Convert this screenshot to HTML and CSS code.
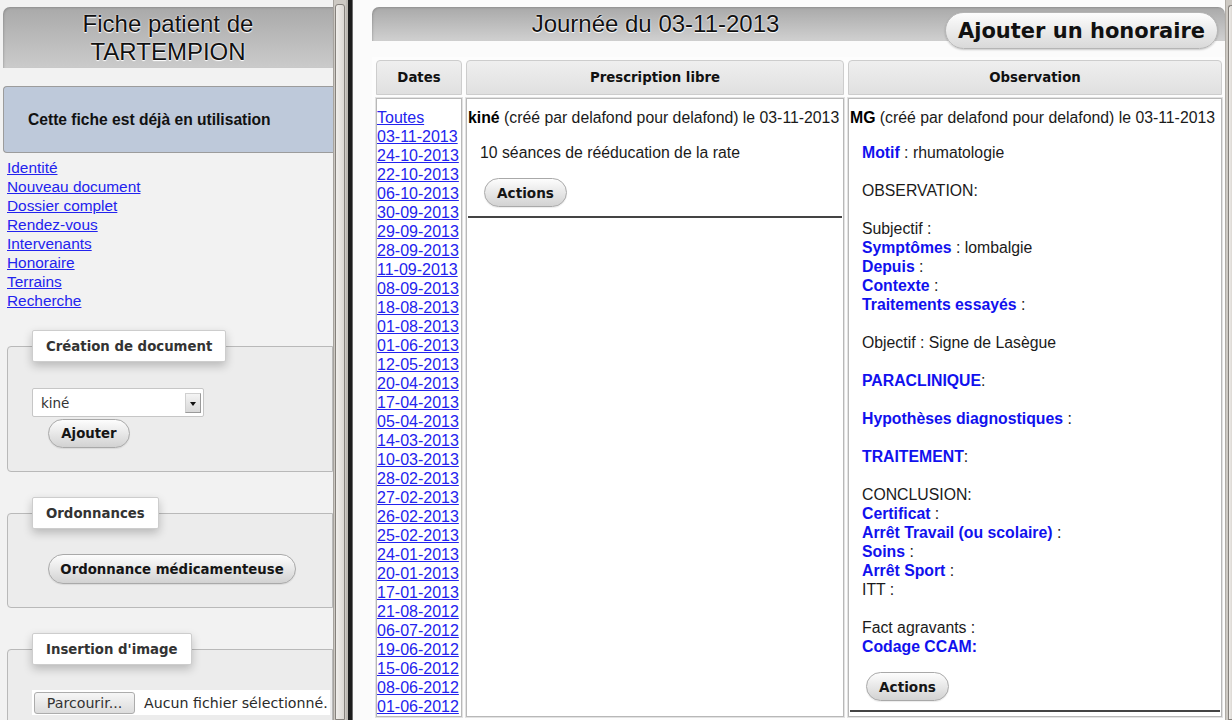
FILE: index.html
```html
<!DOCTYPE html>
<html lang="fr">
<head>
<meta charset="utf-8">
<title>Fiche patient</title>
<link rel="stylesheet" href="styles.css">
</head>
<body>
<div class="screen">
  <div class="left">
    <div class="lhead">Fiche patient de<br>TARTEMPION</div>
    <div class="notice">Cette fiche est déjà en utilisation</div>
    <nav class="menu">
      <a href="#">Identité</a>
      <a href="#">Nouveau document</a>
      <a href="#">Dossier complet</a>
      <a href="#">Rendez-vous</a>
      <a href="#">Intervenants</a>
      <a href="#">Honoraire</a>
      <a href="#">Terrains</a>
      <a href="#">Recherche</a>
    </nav>
    <fieldset class="box first">
      <legend>Création de document</legend>
      <div class="select"><span class="sel-text">kiné</span><span class="sel-arrow"></span></div>
      <button class="btn add">Ajouter</button>
    </fieldset>
    <fieldset class="box">
      <legend>Ordonnances</legend>
      <button class="btn ordo">Ordonnance médicamenteuse</button>
    </fieldset>
    <fieldset class="box">
      <legend>Insertion d'image</legend>
      <div class="file"><span class="file-btn">Parcourir...</span><span class="file-text">Aucun fichier sélectionné.</span></div>
    </fieldset>
  </div>
  <div class="vscroll"><div class="thumb"></div></div>
  <div class="frame-border"></div>
  <div class="right">
    <div class="rhead">
      <h1>Journée du 03-11-2013</h1>
      <button class="btn big">Ajouter un honoraire</button>
    </div>
    <table class="day">
      <thead>
        <tr><th class="c-dates">Dates</th><th class="c-presc">Prescription libre</th><th class="c-obs">Observation</th></tr>
      </thead>
      <tbody>
        <tr>
          <td class="dates">
            <a href="#">Toutes</a>
            <a href="#">03-11-2013</a>
            <a href="#">24-10-2013</a>
            <a href="#">22-10-2013</a>
            <a href="#">06-10-2013</a>
            <a href="#">30-09-2013</a>
            <a href="#">29-09-2013</a>
            <a href="#">28-09-2013</a>
            <a href="#">11-09-2013</a>
            <a href="#">08-09-2013</a>
            <a href="#">18-08-2013</a>
            <a href="#">01-08-2013</a>
            <a href="#">01-06-2013</a>
            <a href="#">12-05-2013</a>
            <a href="#">20-04-2013</a>
            <a href="#">17-04-2013</a>
            <a href="#">05-04-2013</a>
            <a href="#">14-03-2013</a>
            <a href="#">10-03-2013</a>
            <a href="#">28-02-2013</a>
            <a href="#">27-02-2013</a>
            <a href="#">26-02-2013</a>
            <a href="#">25-02-2013</a>
            <a href="#">24-01-2013</a>
            <a href="#">20-01-2013</a>
            <a href="#">17-01-2013</a>
            <a href="#">21-08-2012</a>
            <a href="#">06-07-2012</a>
            <a href="#">19-06-2012</a>
            <a href="#">15-06-2012</a>
            <a href="#">08-06-2012</a>
            <a href="#">01-06-2012</a>
          </td>
          <td class="doc">
            <div class="doc-title"><b>kiné</b> (créé par delafond pour delafond) le 03-11-2013</div>
            <div class="doc-body">10 séances de rééducation de la rate</div>
            <button class="btn act">Actions</button>
            <hr class="sep">
          </td>
          <td class="doc">
            <div class="doc-title"><b>MG</b> (créé par delafond pour delafond) le 03-11-2013</div>
            <div class="doc-body">
              <b class="lbl">Motif</b> : rhumatologie<br>
              <br>
              OBSERVATION:<br>
              <br>
              Subjectif :<br>
              <b class="lbl">Symptômes</b> : lombalgie<br>
              <b class="lbl">Depuis</b> :<br>
              <b class="lbl">Contexte</b> :<br>
              <b class="lbl">Traitements essayés</b> :<br>
              <br>
              Objectif : Signe de Lasègue<br>
              <br>
              <b class="lbl">PARACLINIQUE</b>:<br>
              <br>
              <b class="lbl">Hypothèses diagnostiques</b> :<br>
              <br>
              <b class="lbl">TRAITEMENT</b>:<br>
              <br>
              CONCLUSION:<br>
              <b class="lbl">Certificat</b> :<br>
              <b class="lbl">Arrêt Travail (ou scolaire)</b> :<br>
              <b class="lbl">Soins</b> :<br>
              <b class="lbl">Arrêt Sport</b> :<br>
              ITT :<br>
              <br>
              Fact agravants :<br>
              <b class="lbl">Codage CCAM:</b>
            </div>
            <button class="btn act">Actions</button>
            <hr class="sep">
          </td>
        </tr>
      </tbody>
    </table>
  </div>
  <div class="vscroll narrow"><div class="thumb"></div></div>
</div>
</body>
</html>
```
FILE: styles.css
```css
html, body {
  margin: 0;
  padding: 0;
  width: 1232px;
  height: 720px;
  overflow: hidden;
  font-family: "Liberation Sans", Arial, sans-serif;
  font-size: 15px;
  color: #1a1a1a;
}

.screen {
  display: flex;
  width: 1232px;
  height: 720px;
  overflow: hidden;
}

/* ---------- left frame ---------- */
.left {
  width: 333px;
  flex: none;
  box-sizing: border-box;
  padding: 7px 0 0 3px;
  background: #f2f2f2;
  overflow: hidden;
}

.lhead {
  height: 61px;
  box-sizing: border-box;
  padding-top: 3px;
  text-align: center;
  font-size: 24px;
  line-height: 28px;
  color: #111;
  text-shadow: 0 1px 1px #fff, 0 0 2px #fff;
  background: linear-gradient(#a9a9a9, #cbcbcb);
  border-radius: 7px 0 0 0;
  box-shadow: inset 1px 1px 2px rgba(0,0,0,0.15);
}

.notice {
  margin-top: 18px;
  height: 67px;
  box-sizing: border-box;
  display: flex;
  align-items: center;
  padding-left: 24px;
  background: #bec9da;
  border: 1px solid #9c9c9c;
  border-right: none;
  border-radius: 4px 0 0 4px;
  font-weight: bold;
  font-size: 15.6px;
  color: #111;
}

.menu {
  margin-top: 5px;
  padding-left: 4px;
}

.menu a {
  display: block;
  line-height: 19px;
  font-size: 15.4px;
  color: #2323ee;
  text-decoration: underline;
}

.box {
  margin: 25px 0 0 4px;
  padding: 0 0 23px 24px;
  border: 1px solid #b9b9b9;
  border-radius: 4px 0 0 4px;
  background: #ececec;
  min-width: 0;
}

.box.first {
  margin-top: 20px;
}

.box legend {
  padding: 0 13px;
  height: 32px;
  box-sizing: border-box;
  line-height: 32px;
  background: #fff;
  border: 1px solid #cdcdcd;
  border-radius: 2px;
  box-shadow: 0 4px 10px rgba(0,0,0,0.22);
  font-family: "DejaVu Sans", sans-serif;
  font-weight: bold;
  font-size: 13.3px;
  color: #333;
}

.select {
  margin-top: 26px;
  width: 172px;
  height: 29px;
  box-sizing: border-box;
  display: flex;
  align-items: center;
  justify-content: space-between;
  padding: 0 2px 0 8px;
  background: #fff;
  border: 1px solid #c6c6c6;
  border-radius: 2px;
  font-family: "DejaVu Sans", sans-serif;
  font-size: 13.5px;
  color: #333;
}

.sel-arrow {
  width: 16px;
  height: 20px;
  box-sizing: border-box;
  border: 1px solid #9a9a9a;
  border-top-color: #d0d0d0;
  border-left-color: #d0d0d0;
  background: linear-gradient(#f4f4f4, #d8d8d8);
  position: relative;
}

.sel-arrow::after {
  content: "";
  position: absolute;
  left: 4px;
  top: 8px;
  border-left: 3px solid transparent;
  border-right: 3px solid transparent;
  border-top: 4px solid #111;
}

.btn {
  display: block;
  height: 30px;
  box-sizing: border-box;
  padding: 0 12px;
  border: 1px solid #a9a9a9;
  border-radius: 15px;
  background: linear-gradient(#fdfdfd, #d2d2d2);
  box-shadow: 0 1px 1px rgba(0,0,0,0.08);
  font-family: "DejaVu Sans", sans-serif;
  font-weight: bold;
  font-size: 13.3px;
  color: #151515;
  cursor: pointer;
}

.btn.add {
  margin: 2px 0 0 16px;
  width: 82px;
  height: 29px;
  padding: 0;
}

.btn.ordo {
  margin: 25px 0 0 16px;
  width: 248px;
  padding: 0;
}

.file {
  margin: 25px 0 0 0;
  width: 298px;
  height: 25px;
  display: flex;
  align-items: center;
  background: #fff;
  font-family: "DejaVu Sans", sans-serif;
  font-size: 14.2px;
  color: #2a2a2a;
}

.file-btn {
  margin-left: 2px;
  width: 101px;
  height: 22px;
  box-sizing: border-box;
  display: flex;
  align-items: center;
  justify-content: center;
  border: 1px solid #acacac;
  border-radius: 3px;
  background: linear-gradient(#f6f6f6, #dcdcdc);
  color: #333;
}

.file-text {
  margin-left: 9px;
  white-space: nowrap;
}

/* ---------- scrollbars / frame border ---------- */
.vscroll {
  width: 13px;
  flex: none;
  box-sizing: border-box;
  padding: 4px 1px 0 1px;
  background: #cdc9c3;
  border-left: 1px solid #a7a39e;
}

.vscroll .thumb {
  height: 100%;
  box-sizing: border-box;
  border: 1px solid #85817c;
  border-radius: 3px 3px 0 0;
  background: linear-gradient(to right, #f0eeeb, #dcd8d3);
}

.vscroll.narrow {
  width: 7px;
  padding: 5px 0 0 2px;
  border-left: 1px solid #b0aca6;
}

.vscroll.narrow .thumb {
  border-right: none;
  border-radius: 3px 0 0 0;
}

.frame-border {
  width: 7px;
  flex: none;
  background: linear-gradient(to right, #bcb8b2 0 2px, #1d1d1d 2px 6px, #6f6f6f 6px 7px);
}

/* ---------- right frame ---------- */
.right {
  flex: 1;
  min-width: 0;
  box-sizing: border-box;
  padding: 7px 0 0 19px;
  background: #fbfbfb;
  overflow: hidden;
}

.rhead {
  height: 34px;
  display: flex;
  align-items: flex-start;
  background: linear-gradient(#a9a9a9, #d0d0d0);
  border-radius: 7px 7px 0 0;
  box-shadow: inset 1px 1px 2px rgba(0,0,0,0.15);
}

.rhead h1 {
  flex: 1;
  margin: 0;
  padding-right: 6px;
  text-align: center;
  font-weight: normal;
  font-size: 24px;
  line-height: 34px;
  color: #111;
  text-shadow: 0 1px 1px #fff, 0 0 2px #fff;
}

.btn.big {
  flex: none;
  margin: 5px 7px 0 0;
  width: 273px;
  height: 37px;
  padding: 0;
  border-radius: 19px;
  border-color: #b5b5b5;
  background: linear-gradient(#fdfdfd, #d9d9d9);
  box-shadow: 0 1px 2px rgba(0,0,0,0.2);
  font-size: 21px;
  color: #111;
}

.day {
  margin-top: 16px;
  border-collapse: separate;
  border-spacing: 4px 3px;
  table-layout: fixed;
  width: 854px;
  background: #fdfdfd;
}

.day th {
  height: 35px;
  box-sizing: border-box;
  padding: 0;
  border: 1px solid #cdcdcd;
  border-radius: 4px 4px 0 0;
  background: linear-gradient(#efefef, #e0e0e0);
  font-family: "DejaVu Sans", sans-serif;
  font-weight: bold;
  font-size: 13.3px;
  color: #111;
  text-align: center;
}

.c-dates { width: 86px; }
.c-presc { width: 378px; }
.c-obs { width: 374px; }

.day td {
  vertical-align: top;
  background: #fff;
  border: 1px solid #b8b8b8;
  box-shadow: 0 0 0 1px #e2e2e2;
  padding: 9px 1px 0 1px;
  line-height: 19px;
  font-size: 15.8px;
}

.day td.dates {
  padding: 9px 0 0 0;
}

.dates a {
  display: block;
  font-size: 16px;
  color: #2323ee;
  text-decoration: underline;
}

.doc-title {
  white-space: nowrap;
}

.doc-title b {
  color: #000;
}

.doc-body {
  margin: 16px 0 0 12px;
}

.lbl {
  color: #1111ee;
}

.btn.act {
  margin: 16px 0 0 16px;
  width: 83px;
  height: 29px;
  padding: 0;
  font-size: 13.6px;
}

.sep {
  margin: 9px 0 0 0;
  height: 0;
  border: none;
  border-top: 2px solid #444;
}
```
